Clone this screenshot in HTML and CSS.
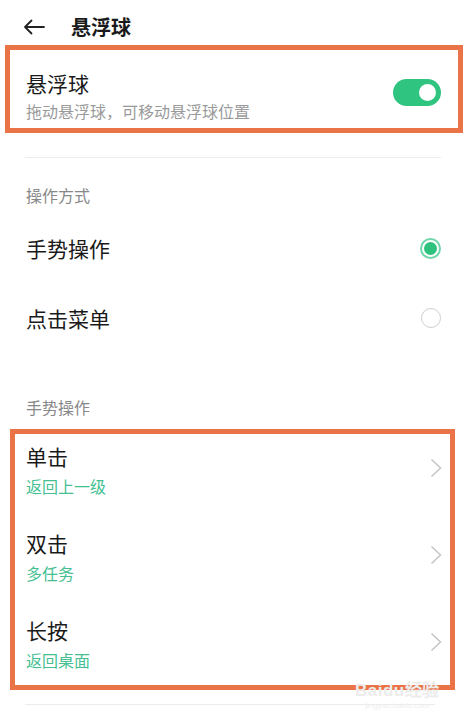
FILE: index.html
```html
<!DOCTYPE html>
<html lang="zh-CN">
<head>
    <meta charset="UTF-8">
    <meta name="viewport" content="width=device-width, initial-scale=1.0">
    <title>悬浮球</title>
    <link rel="stylesheet" href="styles.css">
</head>
<body>
    <div class="header">
        <svg class="back" width="22" height="16" viewBox="0 0 22 16">
            <path d="M21 8H2M8.5 1.5L2 8l6.5 6.5" fill="none" stroke="#222" stroke-width="1.8" stroke-linecap="round" stroke-linejoin="round"/>
        </svg>
        <span class="header-title">悬浮球</span>
    </div>

    <!-- главный переключатель -->
    <div class="mark mark-top">
        <div class="switch-row">
            <div class="text">
                <div class="title">悬浮球</div>
                <div class="sub">拖动悬浮球，可移动悬浮球位置</div>
            </div>
            <div class="toggle"><span class="knob"></span></div>
        </div>
    </div>

    <div class="divider"></div>

    <div class="section-label">操作方式</div>
    <div class="radio-list">
        <div class="radio-row">
            <span class="radio-text">手势操作</span>
            <span class="radio checked"></span>
        </div>
        <div class="radio-row">
            <span class="radio-text">点击菜单</span>
            <span class="radio"></span>
        </div>
    </div>

    <div class="section-label second">手势操作</div>
    <div class="mark mark-list">
        <div class="item">
            <div class="text">
                <div class="item-title">单击</div>
                <div class="item-sub">返回上一级</div>
            </div>
            <svg class="chev" width="12" height="20" viewBox="0 0 12 20"><path d="M1.5 1.5L10.5 10l-9 8.5" fill="none" stroke="#c4c4c4" stroke-width="1.5"/></svg>
        </div>
        <div class="item">
            <div class="text">
                <div class="item-title">双击</div>
                <div class="item-sub">多任务</div>
            </div>
            <svg class="chev" width="12" height="20" viewBox="0 0 12 20"><path d="M1.5 1.5L10.5 10l-9 8.5" fill="none" stroke="#c4c4c4" stroke-width="1.5"/></svg>
        </div>
        <div class="item last">
            <div class="text">
                <div class="item-title">长按</div>
                <div class="item-sub">返回桌面</div>
            </div>
            <svg class="chev" width="12" height="20" viewBox="0 0 12 20"><path d="M1.5 1.5L10.5 10l-9 8.5" fill="none" stroke="#c4c4c4" stroke-width="1.5"/></svg>
        </div>
    </div>

    <div class="divider bottom"></div>

    <div class="watermark">
        <div class="wm-logo">Baidu经验</div>
        <div class="wm-url">jingyan.baidu.com</div>
    </div>
</body>
</html>
```

FILE: styles.css
```css
body {
    margin: 0;
    background: #fff;
    font-family: "Noto Sans CJK SC", "Noto Sans", sans-serif;
    color: #1a1a1a;
    width: 472px;
    height: 720px;
    overflow: hidden;
    position: relative;
}

.header {
    display: flex;
    align-items: center;
    height: 37px;
    padding: 8px 0 0 23px;
}

.header-title {
    margin-left: 26px;
    font-size: 20px;
    font-weight: 700;
}

.mark {
    border: 5px solid #ea7448;
}

.mark-top {
    margin: 0 9px 0 5px;
}

.switch-row {
    display: flex;
    align-items: center;
    justify-content: space-between;
    padding: 20px 17px 7px 16px;
}

.title {
    font-size: 21px;
    line-height: 26px;
}

.sub {
    margin-top: 5px;
    font-size: 16px;
    line-height: 20px;
    color: #9a9a9a;
}

.toggle {
    width: 48px;
    height: 27px;
    border-radius: 14px;
    background: #2fc47f;
    display: flex;
    align-items: center;
    justify-content: flex-end;
    padding-right: 5px;
    box-sizing: border-box;
    margin-bottom: 6px;
}

.knob {
    width: 17px;
    height: 17px;
    border-radius: 50%;
    background: #fff;
}

.divider {
    height: 1px;
    background: #ececec;
    margin: 24px 31px 0 25px;
}

.divider.bottom {
    margin: 14px 37px 0 25px;
}

.section-label {
    margin: 27px 0 0 26px;
    font-size: 16px;
    line-height: 20px;
    color: #888;
}

.section-label.second {
    margin-top: 44px;
}

.radio-list {
    margin-top: 8px;
}

.radio-row {
    display: flex;
    align-items: center;
    justify-content: space-between;
    height: 70px;
    padding: 0 31px 0 26px;
}

.radio-text {
    font-size: 21px;
}

.radio {
    width: 20px;
    height: 20px;
    border-radius: 50%;
    border: 1.5px solid #cfcfcf;
    box-sizing: border-box;
}

.radio.checked {
    width: 21px;
    height: 21px;
    border: 2px solid #72d6ab;
    padding: 2px;
    background: #2ec27e;
    background-clip: content-box;
}

.mark-list {
    margin: 12px 17px 0 10px;
}

.item {
    display: flex;
    align-items: center;
    justify-content: space-between;
    padding: 8px 8px 25px 11px;
}

.item.last {
    padding-bottom: 15px;
}

.item-title {
    font-size: 21px;
    line-height: 28px;
}

.item-sub {
    margin-top: 6px;
    font-size: 16px;
    line-height: 20px;
    color: #45bf92;
}

.chev {
    margin-bottom: 2px;
}

/* водяной знак */
.watermark {
    position: absolute;
    left: 355px;
    top: 681px;
    text-align: center;
    color: #ececec;
}

.wm-logo {
    font-family: "Liberation Sans", sans-serif;
    font-size: 17px;
    font-weight: 700;
    line-height: 20px;
    letter-spacing: 0.5px;
}

.wm-url {
    font-family: "Liberation Sans", sans-serif;
    font-size: 8px;
    line-height: 10px;
    color: #eeeeee;
}
```
